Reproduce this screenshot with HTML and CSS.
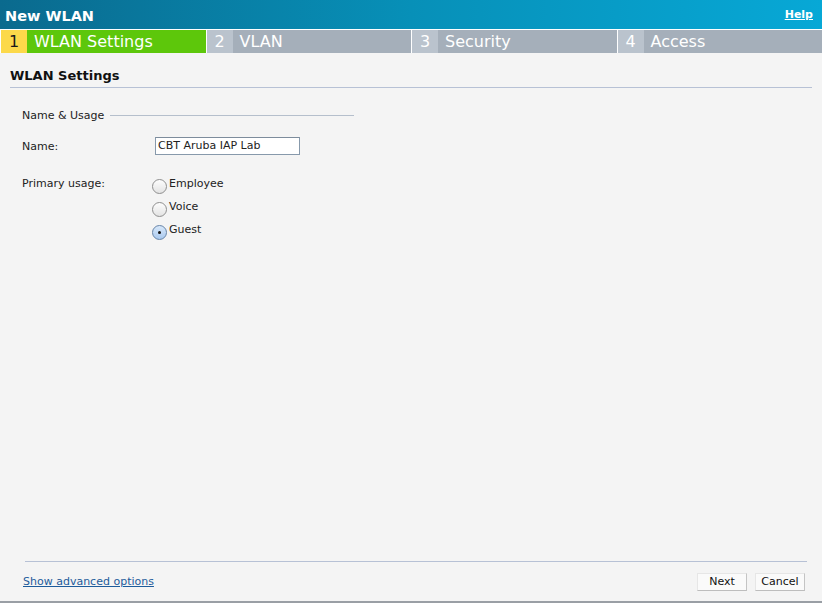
FILE: index.html
```html
<!DOCTYPE html>
<html lang="en">
<head>
    <meta charset="UTF-8">
    <title>New WLAN</title>
    <link rel="stylesheet" href="styles.css">
</head>
<body>
    <div class="wizard">
        <!-- Title bar -->
        <div class="titlebar">
            <span class="title">New WLAN</span>
            <a href="#" class="help">Help</a>
        </div>

        <!-- Steps -->
        <div class="steps">
            <div class="step active"><span class="num">1</span><span class="label">WLAN Settings</span></div>
            <div class="step"><span class="num">2</span><span class="label">VLAN</span></div>
            <div class="step"><span class="num">3</span><span class="label">Security</span></div>
            <div class="step"><span class="num">4</span><span class="label">Access</span></div>
        </div>

        <div class="content">
            <h2 class="page-title">WLAN Settings</h2>

            <div class="group">
                <div class="legend"><span>Name &amp; Usage</span></div>

                <div class="row name-row">
                    <label class="row-label">Name:</label>
                    <div class="text-input">CBT Aruba IAP Lab</div>
                </div>

                <div class="row usage-row">
                    <label class="row-label">Primary usage:</label>
                    <div class="radios">
                        <div class="radio-item"><span class="radio"></span>Employee</div>
                        <div class="radio-item"><span class="radio"></span>Voice</div>
                        <div class="radio-item"><span class="radio checked"></span>Guest</div>
                    </div>
                </div>
            </div>
        </div>

        <!-- Footer -->
        <div class="footer">
            <a href="#" class="advanced">Show advanced options</a>
            <div class="buttons">
                <button class="btn">Next</button>
                <button class="btn">Cancel</button>
            </div>
        </div>
    </div>
</body>
</html>
```

FILE: styles.css
```css
html, body {
    margin: 0;
    padding: 0;
}

body {
    font-family: "DejaVu Sans", Verdana, sans-serif;
    font-size: 11px;
    color: #222;
    background: #f4f4f4;
}

.wizard {
    height: 603px;
    display: flex;
    flex-direction: column;
    box-sizing: border-box;
    border-bottom: 2px solid #9a9fa5;
}

.titlebar {
    height: 29px;
    display: flex;
    align-items: center;
    justify-content: space-between;
    padding: 0 9px 0 5px;
    background: linear-gradient(to right, #0a6a8e 0%, #0790b8 50%, #07a8d6 100%);
}

.title {
    color: #fff;
    font-size: 14.5px;
    font-weight: bold;
    margin-top: 2px;
}

.help {
    color: #fff;
    font-size: 11px;
    font-weight: bold;
}

.steps {
    display: flex;
    height: 23px;
    border-top: 1px solid #fff;
}

.step {
    flex: 1;
    display: flex;
    border-left: 1px solid #fff;
    color: #fff;
    font-size: 16px;
}

.step .num {
    width: 26px;
    display: flex;
    align-items: center;
    justify-content: center;
    background: #bac3cd;
}

.step .label {
    flex: 1;
    display: flex;
    align-items: center;
    padding-left: 7px;
    background: #a5afba;
}

.step.active .num {
    background: #fcd94a;
    color: #1a1a1a;
}

.step.active .label {
    background: #5dc70b;
}

.content {
    flex: 1;
    padding: 0 10px;
}

.page-title {
    margin: 15px 0 0;
    padding: 0 0 4px 0;
    font-size: 13px;
    font-weight: bold;
    color: #111;
    border-bottom: 1px solid #b7c1d5;
}

.group {
    padding-left: 12px;
}

.legend {
    width: 332px;
    margin-top: 21px;
    display: flex;
    align-items: center;
}

.legend::after {
    content: "";
    flex: 1;
    margin-left: 6px;
    border-top: 1px solid #b5bfcc;
}

.row {
    display: flex;
}

.row-label {
    width: 133px;
}

.name-row {
    margin-top: 15px;
    align-items: center;
}

.text-input {
    width: 141px;
    height: 16px;
    line-height: 16px;
    padding-left: 2px;
    background: #fff;
    border: 1px solid #8799ab;
    border-top-color: #7d8c9c;
}

.usage-row {
    margin-top: 22px;
}

.radios {
    margin-left: -3px;
    margin-top: -5px;
}

.radio-item {
    display: flex;
    align-items: center;
    height: 23px;
}

.radio {
    width: 13px;
    height: 13px;
    margin-right: 2px;
    margin-top: 5px;
    border-radius: 50%;
    border: 1px solid #8f8f8f;
    background: linear-gradient(#fdfdfd, #e3e3e3);
    position: relative;
}

.radio.checked {
    border-color: #6684a8;
    background: linear-gradient(#d8e8fa, #a9c9ee);
}

.radio.checked::after {
    content: "";
    position: absolute;
    left: 5px;
    top: 5px;
    width: 3px;
    height: 3px;
    border-radius: 50%;
    background: #111;
}

.footer {
    margin: 0 17px 0 23px;
    height: 39px;
    display: flex;
    align-items: center;
    justify-content: space-between;
    position: relative;
    margin-bottom: 1px;
}

.footer::before {
    content: "";
    position: absolute;
    top: 0;
    left: 2px;
    right: -2px;
    border-top: 1px solid #b7c1d5;
}

.advanced {
    color: #1d5b9b;
    margin-top: 2px;
}

.buttons {
    display: flex;
    gap: 8px;
    margin-top: 2px;
}

.btn {
    width: 50px;
    height: 18px;
    padding: 0;
    font-family: "DejaVu Sans", Verdana, sans-serif;
    font-size: 11px;
    color: #111;
    background: #fafafa;
    border: 1px solid #e6e6e6;
    border-right-color: #c4c4c4;
    border-bottom-color: #bdbdbd;
}
```
